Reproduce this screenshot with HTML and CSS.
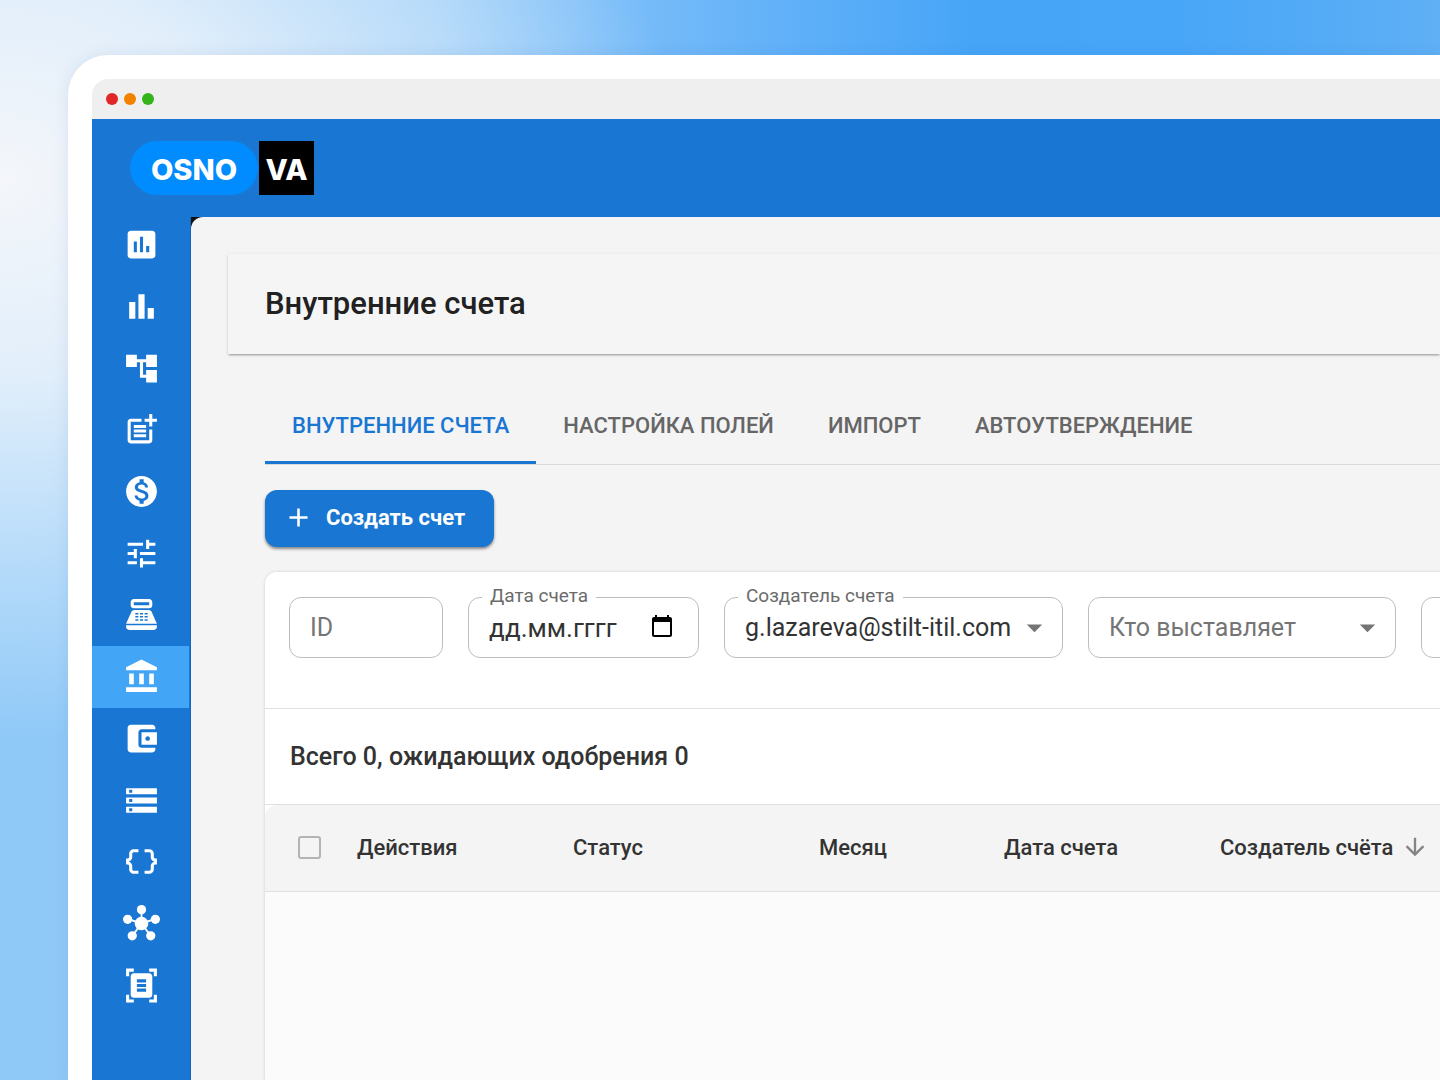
FILE: index.html
```html
<!DOCTYPE html>
<html lang="ru">
<head>
<meta charset="utf-8">
<meta name="viewport" content="width=device-width, initial-scale=1">
<title>Внутренние счета</title>
<link rel="stylesheet" href="styles.css">
</head>
<body>
<div class="window">
  <div class="titlebar"><span class="dot dot-red"></span><span class="dot dot-orange"></span><span class="dot dot-green"></span></div>
  <header class="header">
    <a class="logo" href="#"><span class="logo-pill">OSNO</span><span class="logo-box">VA</span></a>
  </header>
  <div class="layout">
    <nav class="sidebar" aria-label="Разделы">
      <a class="nav-item" href="#" aria-label="Отчёты"><svg class="icon" viewBox="0 0 24 24"><path d="M19 3H5c-1.1 0-2 .9-2 2v14c0 1.1.9 2 2 2h14c1.1 0 2-.9 2-2V5c0-1.1-.9-2-2-2zM9 17H7v-7h2v7zm4 0h-2V7h2v10zm4 0h-2v-4h2v4z"/></svg></a>
      <a class="nav-item" href="#" aria-label="Статистика"><svg class="icon" viewBox="0 0 24 24"><path d="M4 9h4v11H4zm12 4h4v7h-4zm-6-9h4v16h-4z"/></svg></a>
      <a class="nav-item" href="#" aria-label="Структура"><svg class="icon" viewBox="0 0 24 24"><path d="M22 11V3h-7v3H9V3H2v8h7V8h2v10h4v3h7v-8h-7v3h-2V8h2v3z"/></svg></a>
      <a class="nav-item" href="#" aria-label="Новая запись"><svg class="icon" viewBox="0 0 24 24"><path d="M17 19H5V7h7V5H5c-1.1 0-2 .9-2 2v12c0 1.1.9 2 2 2h12c1.1 0 2-.9 2-2v-7h-2z"/><path d="M19 2h-2v3h-3v2h3v3h2V7h3V5h-3zM7 9h8v2H7zM7 12h8v2H7zM7 15h8v2H7z"/></svg></a>
      <a class="nav-item" href="#" aria-label="Финансы"><svg class="icon" viewBox="0 0 24 24"><path d="M12 2C6.48 2 2 6.48 2 12s4.48 10 10 10 10-4.48 10-10S17.52 2 12 2zm1.41 16.09V20h-2.67v-1.93c-1.71-.36-3.16-1.46-3.27-3.4h1.96c.1 1.05.82 1.87 2.65 1.87 1.96 0 2.4-.98 2.4-1.59 0-.83-.44-1.61-2.67-2.14-2.48-.6-4.18-1.62-4.18-3.67 0-1.72 1.39-2.84 3.11-3.21V4h2.67v1.95c1.86.45 2.79 1.86 2.85 3.39H14.3c-.05-1.11-.64-1.87-2.22-1.87-1.5 0-2.4.68-2.4 1.64 0 .84.65 1.39 2.67 1.91s4.18 1.39 4.18 3.91c-.01 1.83-1.38 2.83-3.12 3.16z"/></svg></a>
      <a class="nav-item" href="#" aria-label="Настройки"><svg class="icon" viewBox="0 0 24 24"><path d="M3 17v2h6v-2H3zM3 5v2h10V5H3zm10 16v-2h8v-2h-8v-2h-2v6h2zM7 9v2H3v2h4v2h2V9H7zm14 4v-2H11v2h10zm-6-4h2V7h4V5h-4V3h-2v6z"/></svg></a>
      <a class="nav-item" href="#" aria-label="Касса"><svg class="icon" viewBox="0 0 24 24"><path fill-rule="evenodd" d="M17 2H7c-1.1 0-2 .9-2 2v2c0 1.1.9 2 2 2h10c1.1 0 2-.9 2-2V4c0-1.1-.9-2-2-2zm0 4H7V4h10zM20 22H4c-1.1 0-2-.9-2-2v-1h20v1c0 1.1-.9 2-2 2zM18.53 10.190C18.210 9.470 17.490 9 16.700 9H7.300c-.79 0-1.510.470-1.830 1.190L2 18h20zM8 11h2v1H8zM8 13h2v1H8zM8 15h2v1H8zM11 11h2v1h-2zM11 13h2v1h-2zM11 15h2v1h-2zM14 11h2v1h-2zM14 13h2v1h-2zM14 15h2v1h-2z"/></svg></a>
      <a class="nav-item nav-active" href="#" aria-label="Внутренние счета" aria-current="page"><svg class="icon" viewBox="0 0 24 24"><path d="M4 10h3v7H4zM10.500 10h3v7h-3zM2 19h20v3H2zM17 10h3v7h-3zM12 1 2 6v2h20V6z"/></svg></a>
      <a class="nav-item" href="#" aria-label="Кошелёк"><svg class="icon" viewBox="0 0 24 24"><path d="M21 18v1c0 1.100-.9 2-2 2H5c-1.110 0-2-.9-2-2V5c0-1.100.890-2 2-2h14c1.100 0 2 .9 2 2v1h-9c-1.110 0-2 .9-2 2v8c0 1.100.890 2 2 2h9zm-9-2h10V8H12v8zm4-2.500c-.83 0-1.500-.67-1.500-1.500s.67-1.500 1.500-1.500 1.500.67 1.500 1.500-.67 1.500-1.500 1.500z"/></svg></a>
      <a class="nav-item" href="#" aria-label="Хранилище"><svg class="icon" viewBox="0 0 24 24"><path d="M2 20h20v-4H2v4zm2-3h2v2H4v-2zM2 4v4h20V4H2zm4 3H4V5h2v2zm-4 7h20v-4H2v4zm2-3h2v2H4v-2z"/></svg></a>
      <a class="nav-item" href="#" aria-label="Данные"><svg class="icon" viewBox="0 0 24 24"><path d="M4 7v2c0 .55-.45 1-1 1H2v4h1c.55 0 1 .45 1 1v2c0 1.650 1.350 3 3 3h3v-2H7c-.55 0-1-.45-1-1v-2c0-1.300-.84-2.420-2-2.830v-.34C5.160 11.420 6 10.300 6 9V7c0-.55.45-1 1-1h3V4H7C5.350 4 4 5.350 4 7zM21 10c-.55 0-1-.45-1-1V7c0-1.650-1.350-3-3-3h-3v2h3c.55 0 1 .45 1 1v2c0 1.300.84 2.420 2 2.830v.34c-1.160.41-2 1.520-2 2.830v2c0 .55-.45 1-1 1h-3v2h3c1.650 0 3-1.350 3-3v-2c0-.55.45-1 1-1h1v-4z"/></svg></a>
      <a class="nav-item" href="#" aria-label="Интеграции"><svg class="icon" viewBox="0 0 24 24"><path d="M12 12V3M12 12 3 9M12 12l9-3M12 12l-6 8M12 12l6 8" stroke="currentColor" stroke-width="1.200"/><circle cx="12" cy="12" r="4.400"/><circle cx="12" cy="3" r="3"/><circle cx="3" cy="9.300" r="3"/><circle cx="21" cy="9.300" r="3"/><circle cx="6" cy="20" r="3"/><circle cx="18" cy="20" r="3"/></svg></a>
      <a class="nav-item" href="#" aria-label="Сканер документов"><svg class="icon" viewBox="0 0 24 24"><path d="M7 3H4v3H2V1h5zM22 6V1h-5v2h3v3zM7 21H4v-3H2v5h5zM20 18v3h-3v2h5v-5z"/><path fill-rule="evenodd" d="M19 18c0 1.100-.9 2-2 2H7c-1.100 0-2-.9-2-2V6c0-1.100.9-2 2-2h10c1.100 0 2 .9 2 2zM15 8H9v2h6zM15 11H9v2h6zM15 14H9v2h6z"/></svg></a>
    </nav>
    <div class="main-wrap">
      <main class="main">
        <div class="page-head"><h1 class="page-title">Внутренние счета</h1></div>
        <div class="content">
          <div class="tabs" role="tablist">
            <button class="tab tab-active" type="button" role="tab" aria-selected="true">Внутренние счета</button>
            <button class="tab" type="button" role="tab" aria-selected="false">Настройка полей</button>
            <button class="tab" type="button" role="tab" aria-selected="false">Импорт</button>
            <button class="tab" type="button" role="tab" aria-selected="false">Автоутверждение</button>
          </div>
          <button class="create" type="button"><svg class="create-icon" viewBox="0 0 24 24"><path d="M19 13h-6v6h-2v-6H5v-2h6V5h2v6h6z"/></svg>Создать счет</button>
          <section class="card">
            <form class="filters">
              <div class="field field-id"><input class="control" type="text" placeholder="ID" aria-label="ID"></div>
              <div class="field field-date">
                <label class="field-label" for="date">Дата счета</label>
                <input class="control control-date" id="date" type="text" placeholder="дд.мм.гггг">
                <svg class="calendar" viewBox="0 0 20 22"><path fill-rule="evenodd" d="M3 0h2v2h10V0h2v2h1c1.100 0 2 .9 2 2v16c0 1.100-.9 2-2 2H2c-1.100 0-2-.9-2-2V4c0-1.100.9-2 2-2h1zM2 7v13h16V7z"/></svg>
              </div>
              <div class="field field-creator">
                <label class="field-label" for="creator">Создатель счета</label>
                <select class="control" id="creator"><option>g.lazareva@stilt-itil.com</option></select>
                <svg class="caret" viewBox="0 0 24 24"><path d="M7 10l5 5 5-5z"/></svg>
              </div>
              <div class="field field-issuer">
                <select class="control control-empty" aria-label="Кто выставляет"><option>Кто выставляет</option></select>
                <svg class="caret" viewBox="0 0 24 24"><path d="M7 10l5 5 5-5z"/></svg>
              </div>
              <div class="field field-issuer"><input class="control" type="text" aria-label="Получатель"></div>
            </form>
            <p class="summary">Всего 0, ожидающих одобрения 0</p>
            <table class="table">
              <colgroup><col class="col-check"><col class="col-actions"><col class="col-status"><col class="col-month"><col class="col-date"><col></colgroup>
              <thead>
                <tr>
                  <th class="check-cell"><input class="checkbox" type="checkbox" aria-label="Выбрать все"></th>
                  <th>Действия</th>
                  <th>Статус</th>
                  <th>Месяц</th>
                  <th>Дата счета</th>
                  <th><span class="sort">Создатель счёта<svg class="sort-icon" viewBox="0 0 24 24"><path d="M20 12l-1.410-1.410L13 16.170V4h-2v12.170l-5.580-5.590L4 12l8 8z"/></svg></span></th>
                </tr>
              </thead>
            </table>
          </section>
        </div>
      </main>
    </div>
  </div>
</div>
</body>
</html>
```
FILE: styles.css
```css
* {
  box-sizing: border-box;
}

body {
  margin: 0;
  min-height: 100vh;
  padding: 55px 0 0 68px;
  overflow: hidden;
  font-family: Roboto, "Noto Sans", sans-serif;
  color: #333;
  background:
    radial-gradient(ellipse 680px 560px at 0 180px, #f4f6fa 0, rgba(240, 245, 251, 0.85) 35%, rgba(236, 244, 252, 0.4) 70%, rgba(236, 244, 252, 0) 100%),
    linear-gradient(90deg, #8fc9f8 0, #96cbf8 30%, #60b0f9 55%, #46a5f7 68%, #48a6f8 82%, #5fb0f5 100%);
}

button,
input,
select {
  font: inherit;
}

svg {
  fill: currentColor;
}

.window {
  display: flex;
  flex-direction: column;
  min-height: calc(100vh - 55px);
  padding: 24px 0 0 24px;
  border-radius: 40px 0 0 0;
  background: #fff;
  box-shadow: 0 0 16px rgba(40, 90, 150, 0.1);
}

.titlebar {
  display: flex;
  align-items: center;
  gap: 6px;
  height: 40px;
  padding-left: 14px;
  border-radius: 16px 0 0 0;
  background: #efefef;
}

.dot {
  width: 12px;
  height: 12px;
  border-radius: 50%;
}

.dot-red {
  background: #e02626;
}

.dot-orange {
  background: #f28100;
}

.dot-green {
  background: #34b41a;
}

.header {
  padding: 22px 38px;
  background: #1976d2;
}

.logo {
  display: inline-flex;
  gap: 1px;
  height: 54px;
  color: #fff;
  font: 800 29px/57px Inter, sans-serif;
  text-align: center;
  text-decoration: none;
  vertical-align: top;
}

.logo-pill {
  width: 128px;
  border-radius: 27px;
  background: #008cff;
}

.logo-box {
  width: 55px;
  background: #000;
}

.layout {
  display: flex;
  flex: 1;
  background: #1976d2;
}

.sidebar {
  display: grid;
  flex: none;
  grid-auto-rows: 1fr;
  align-self: flex-start;
  width: 98px;
  height: 802px;
  margin-top: -3px;
}

.nav-item {
  display: flex;
  align-items: center;
  justify-content: center;
  margin-right: 1px;
  padding-left: 2px;
  color: #fff;
}

.nav-active {
  background: #42a5f5;
}

.icon {
  width: 37px;
  height: 37px;
  overflow: visible;
}

.main-wrap {
  display: flex;
  flex: 1;
  min-width: 0;
  border-left: 1px solid #1565b8;
  background: linear-gradient(#111 0 16px, #f4f4f4 16px);
}

.main {
  display: flex;
  flex: 1;
  flex-direction: column;
  min-width: 0;
  padding: 37px 0 0 37px;
  border-radius: 12px 0 0 0;
  background: #f4f4f4;
}

.page-head {
  padding: 30px 37px;
  background: #f5f5f5;
  box-shadow: 0 2px 2px -1px rgba(0, 0, 0, 0.3), 0 1px 3px rgba(0, 0, 0, 0.15);
}

.page-title {
  margin: 0;
  color: #212121;
  font-size: 31px;
  font-weight: 500;
  line-height: 40px;
}

.content {
  display: flex;
  flex: 1;
  flex-direction: column;
  padding: 36px 0 0 37px;
}

.tabs {
  display: flex;
  height: 75px;
  border-bottom: 1px solid #d8d8d8;
}

.tab {
  height: 74px;
  padding: 0 27px;
  border: 0;
  border-bottom: 3px solid transparent;
  background: none;
  color: #666;
  font-size: 22px;
  font-weight: 500;
  text-transform: uppercase;
  white-space: nowrap;
}

.tab-active {
  border-color: #1976d2;
  color: #1976d2;
}

.create {
  display: flex;
  align-items: center;
  align-self: flex-start;
  gap: 12px;
  height: 57px;
  margin: 25px 0;
  padding: 0 29px 2px 18px;
  border: 0;
  border-radius: 12px;
  background: #1976d2;
  box-shadow: 0 2px 3px rgba(0, 0, 0, 0.45);
  color: #fff;
  font-size: 22px;
  font-weight: 700;
}

.create-icon {
  width: 31px;
  height: 31px;
}

.card {
  flex: 1;
  overflow: hidden;
  border-radius: 12px 0 0 0;
  background: #fbfbfb;
  box-shadow: 0 0 3px rgba(0, 0, 0, 0.18);
}

.filters {
  display: flex;
  gap: 25px;
  padding: 25px 24px 50px;
  background: #fff;
}

.field {
  position: relative;
  flex: none;
}

.field-id {
  width: 154px;
}

.field-date {
  width: 231px;
}

.field-creator {
  width: 339px;
}

.field-issuer {
  width: 308px;
}

.control {
  width: 100%;
  height: 61px;
  padding: 0 20px;
  border: 1px solid #bdbdbd;
  border-radius: 12px;
  appearance: none;
  background: #fff;
  color: #333;
  font-size: 25px;
}

.control::placeholder {
  color: #757575;
  opacity: 1;
}

.control-date {
  font-size: 26px;
}

.control-date::placeholder {
  color: #333;
}

.control-empty {
  color: #757575;
}

.field-label {
  position: absolute;
  top: -12px;
  left: 14px;
  padding: 0 8px;
  background: #fff;
  color: #6b6b6b;
  font-size: 19px;
  line-height: 22px;
}

.calendar {
  position: absolute;
  top: 18px;
  right: 27px;
  width: 20px;
  height: 22px;
  color: #000;
}

.caret {
  position: absolute;
  top: 12px;
  right: 10px;
  width: 37px;
  height: 37px;
  color: #757575;
  pointer-events: none;
}

.summary {
  margin: 0;
  padding: 0 25px;
  border-top: 1px solid #e0e0e0;
  border-bottom: 1px solid #e0e0e0;
  background: #fff;
  font-size: 25px;
  font-weight: 500;
  line-height: 95px;
}

.table {
  width: 100%;
  border-collapse: separate;
  border-spacing: 0;
  table-layout: fixed;
  background: #fff;
}

.col-check {
  width: 92px;
}

.col-actions {
  width: 216px;
}

.col-status {
  width: 246px;
}

.col-month {
  width: 185px;
}

.col-date {
  width: 216px;
}

.table th {
  height: 87px;
  padding: 0 0 2px;
  border-bottom: 1px solid #e0e0e0;
  background: #f4f4f4;
  font-size: 22px;
  font-weight: 500;
  text-align: left;
  white-space: nowrap;
}

.table .check-cell {
  padding-left: 33px;
  border-radius: 12px 0 0 0;
}

.checkbox {
  display: block;
  width: 23px;
  height: 23px;
  margin: 0;
  border: 2px solid #b4b4b4;
  border-radius: 3px;
  appearance: none;
}

.sort {
  display: flex;
  align-items: center;
  gap: 8px;
}

.sort-icon {
  width: 28px;
  height: 28px;
  color: #858585;
}
```
